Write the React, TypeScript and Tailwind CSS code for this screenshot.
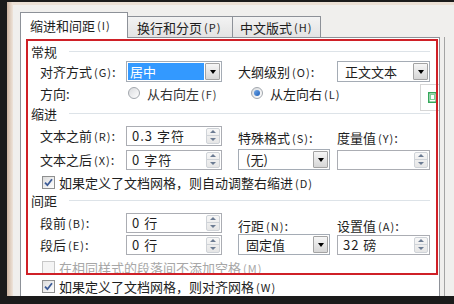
import React from "react";

function K({ k }: { k: string }) {
  return <span className="ml-[2px] text-[11px] tracking-[1px]">({k})</span>;
}

function Arrow() {
  return <div className="h-0 w-0 border-l-[3.5px] border-r-[3.5px] border-t-[4px] border-l-transparent border-r-transparent border-t-black" />;
}

function Select({ value, w, on }: { value: string; w: string; on?: boolean }) {
  return (
    <div className={`flex h-[21px] items-stretch border border-[#a5acb5] bg-white p-[1px] ${w}`}>
      <div className={on ? "flex flex-1 items-center bg-[#3399ff] pl-[2px] text-white" : "flex flex-1 items-center pl-[6px]"}>{value}</div>
      <div className="ml-[1px] flex w-[15px] items-center justify-center rounded-[1px] border border-[#a3a3a3] bg-gradient-to-b from-[#f6f6f6] to-[#d6d6d6]">
        <Arrow />
      </div>
    </div>
  );
}

function Spin({ value, w }: { value: string; w: string }) {
  return (
    <div className={`flex h-[20px] items-stretch border border-[#abadb3] bg-white ${w}`}>
      <div className="flex flex-1 items-center pl-[5px] tracking-[1px]">{value}</div>
      <div className="my-[1px] mr-[1px] flex w-[14px] flex-col rounded-[2px] border border-[#cfd3d8] bg-gradient-to-b from-[#f7f7f7] to-[#e6e6e6]">
        <div className="flex flex-1 items-center justify-center border-b border-[#cfd3d8]">
          <div className="h-0 w-0 border-l-[3px] border-r-[3px] border-b-[3px] border-l-transparent border-r-transparent border-b-[#6c7c93]" />
        </div>
        <div className="flex flex-1 items-center justify-center">
          <div className="h-0 w-0 border-l-[3px] border-r-[3px] border-t-[3px] border-l-transparent border-r-transparent border-t-[#6c7c93]" />
        </div>
      </div>
    </div>
  );
}

function Radio({ on }: { on?: boolean }) {
  return (
    <div className="flex h-[12px] w-[12px] items-center justify-center rounded-full border border-[#a2a7ad] bg-gradient-to-br from-[#d9dbde] to-white">
      {on && <div className="h-[6px] w-[6px] rounded-full bg-gradient-to-br from-[#6fa7e8] to-[#1d5fb8]" />}
    </div>
  );
}

function Check({ on, off }: { on?: boolean; off?: boolean }) {
  return (
    <div
      className={
        off
          ? "h-[13px] w-[13px] border border-[#c8c8c8] bg-[#f4f4f4]"
          : "flex h-[13px] w-[13px] items-center justify-center border border-[#8e8f8f] bg-gradient-to-br from-[#dcdcdc] to-white"
      }
    >
      {on && (
        <svg width="9" height="9" viewBox="0 0 9 9">
          <path d="M1 4.6 L3.4 7.2 L8 1.2" fill="none" stroke="#3c5b97" strokeWidth="1.8" />
        </svg>
      )}
    </div>
  );
}

function Header({ text, h }: { text: string; h: string }) {
  return (
    <div className={`flex items-center pl-[10px] pr-[9px] ${h}`}>
      <span>{text}</span>
      <div className="ml-[12px] h-px flex-1 bg-[#dde3e8]" />
    </div>
  );
}

export default function App() {
  return (
    <div className="relative h-[304px] w-[454px] overflow-hidden bg-[#1b1b1b] pl-[7px] pt-[2px] pb-[8px] font-['Noto_Sans_CJK_SC','Noto_Sans',sans-serif] text-[13px] leading-none text-[#1e1e1e]">
      <div className="flex h-full">
        <div className="w-[6px] bg-gradient-to-r from-[#cdb4a0] to-[#efe5db]" />
        <div className="flex flex-1 border-t-[3px] border-[#ebe0d5] bg-[#f0efed] pl-[7px] pt-[8px]">
          <div className="flex w-[420px] flex-col">
            {/* tabs */}
            <div className="flex h-[24px] items-end">
              <div className="relative z-10 -mb-px flex h-[26px] w-[108px] items-center border border-b-0 border-[#8d9198] bg-white pl-[9px]">
                缩进和间距<K k="I" />
              </div>
              <div className="flex h-[21px] w-[105px] items-center border border-b-0 border-l-0 border-[#8d9198] bg-gradient-to-b from-[#f3f3f3] to-[#e3e3e3] pl-[9px]">
                换行和分页<K k="P" />
              </div>
              <div className="flex h-[21px] w-[88px] items-center border border-b-0 border-l-0 border-[#8d9198] bg-gradient-to-b from-[#f3f3f3] to-[#e3e3e3] pl-[7px]">
                中文版式<K k="H" />
              </div>
            </div>

            {/* panel */}
            <div className="relative flex flex-1 flex-col border border-b-0 border-[#8d9198] bg-white pt-[3px]">
              <Header text="常规" h="h-[20px]" />

              <div className="flex h-[21px] items-center pl-[19px]">
                <div className="w-[86px]">对齐方式<K k="G" />:</div>
                <Select value="居中" w="w-[96px]" on />
                <div className="w-[16px]" />
                <div className="w-[99px]">大纲级别<K k="O" />:</div>
                <Select value="正文文本" w="w-[93px]" />
              </div>

              <div className="flex h-[22px] items-center pl-[19px]">
                <div className="w-[88px]">方向:</div>
                <Radio />
                <div className="ml-[7px] w-[104px] text-[#333]">
                  从右向左<K k="F" />
                </div>
                <Radio on />
                <div className="ml-[7px]">
                  从左向右<K k="L" />
                </div>
              </div>

              <Header text="缩进" h="h-[18px]" />

              <div className="mt-[3px] flex flex-col gap-[3px] pl-[19px]">
                <div className="flex h-[21px] items-center">
                  <div className="w-[86px]">文本之前<K k="R" />:</div>
                  <Spin value="0.3 字符" w="w-[96px]" />
                  <div className="w-[16px]" />
                  <div className="mt-[4px] w-[99px]">特殊格式<K k="S" />:</div>
                  <div className="mt-[4px]">度量值<K k="Y" />:</div>
                </div>
                <div className="flex h-[21px] items-center">
                  <div className="w-[86px]">文本之后<K k="X" />:</div>
                  <Spin value="0 字符" w="w-[96px]" />
                  <div className="w-[16px]" />
                  <Select value="(无)" w="w-[92px]" />
                  <div className="w-[7px]" />
                  <Spin value="" w="w-[93px]" />
                </div>
              </div>

              <div className="mt-[2px] flex h-[20px] items-center pl-[21px]">
                <Check on />
                <div className="ml-[4px]">
                  如果定义了文档网格，则自动调整右缩进<K k="D" />
                </div>
              </div>

              <Header text="间距" h="h-[16px]" />

              <div className="mt-[4px] flex flex-col gap-[1px] pl-[19px]">
                <div className="flex h-[21px] items-center">
                  <div className="w-[86px]">段前<K k="B" />:</div>
                  <Spin value="0 行" w="w-[96px]" />
                  <div className="w-[16px]" />
                  <div className="mt-[5px] w-[99px]">行距<K k="N" />:</div>
                  <div className="mt-[5px]">设置值<K k="A" />:</div>
                </div>
                <div className="flex h-[21px] items-center">
                  <div className="w-[86px]">段后<K k="E" />:</div>
                  <Spin value="0 行" w="w-[96px]" />
                  <div className="w-[16px]" />
                  <Select value="固定值" w="w-[92px]" />
                  <div className="w-[7px]" />
                  <Spin value="32 磅" w="w-[93px]" />
                </div>
              </div>

              <div className="mt-[2px] flex h-[20px] items-center pl-[21px] text-[#a7a7a7]">
                <Check off />
                <div className="ml-[4px]">
                  在相同样式的段落间不添加空格<K k="M" />
                </div>
              </div>

              <div className="flex h-[19px] items-center pl-[21px]">
                <Check on />
                <div className="ml-[4px]">
                  如果定义了文档网格，则对齐网格<K k="W" />
                </div>
              </div>

              {/* small floating widget at the right edge */}
              <div className="absolute right-0 top-[46px] flex h-[27px] w-[19px] items-center justify-end border border-r-0 border-[#d6d6d6] bg-white pr-[2px]">
                <svg width="9" height="11" viewBox="0 0 9 11">
                  <rect x="0.75" y="0.75" width="7.5" height="9.5" fill="none" stroke="#35a85b" strokeWidth="1.5" />
                  <rect x="2.5" y="2.5" width="4" height="5" fill="none" stroke="#7fcf98" strokeWidth="1" />
                </svg>
              </div>
            </div>
          </div>
          <div className="ml-[4px] mt-[24px] w-px bg-[#a4a4a4]" />
        </div>
      </div>

      {/* red annotation frame */}
      <div className="pointer-events-none absolute left-[26px] top-[39px] h-[236px] w-[412px] border-2 border-[#cf2027]" />
    </div>
  );
}
